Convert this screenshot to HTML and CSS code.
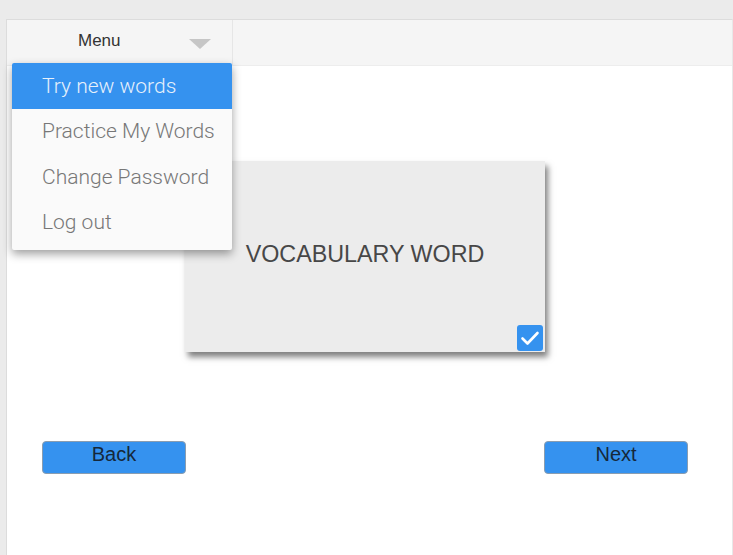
FILE: index.html
```html
<!DOCTYPE html>
<html>
<head>
<meta charset="utf-8">
<link rel="stylesheet" href="styles.css">
</head>
<body>
<div class="frame">
  <header class="topbar">
    <div class="menu-cell">
      <span class="menu-label">Menu</span>
      <span class="caret"></span>
      <ul class="dropdown">
        <li class="item active">Try new words</li>
        <li class="item">Practice My Words</li>
        <li class="item">Change Password</li>
        <li class="item">Log out</li>
      </ul>
    </div>
    <div class="bar-rest"></div>
  </header>
  <main class="content">
    <div class="card">
      <span class="word">VOCABULARY WORD</span>
      <span class="check">
        <svg width="26" height="26" viewBox="0 0 26 26"><path d="M5.5 13.5 L10.5 18.5 L20.5 8" fill="none" stroke="#fff" stroke-width="2.6" stroke-linecap="round" stroke-linejoin="round"/></svg>
      </span>
    </div>
    <div class="nav">
      <button class="btn">Back</button>
      <button class="btn">Next</button>
    </div>
  </main>
</div>
</body>
</html>
```

FILE: styles.css
```css
html, body {
  margin: 0;
  padding: 0;
  height: 100%;
}
body {
  background: #ebebeb;
  overflow: hidden;
}
.frame {
  margin: 19px 0 0 6px;
  height: calc(100% - 19px);
  border-top: 1px solid #dcdcdc;
  border-left: 1px solid #dcdcdc;
  border-right: 1px solid #e8e8e8;
  background: #fff;
  box-sizing: border-box;
}
.topbar {
  display: flex;
  height: 46px;
  background: #f5f5f5;
  border-bottom: 1px solid #ededed;
  box-sizing: border-box;
}
.menu-cell {
  position: relative;
  width: 226px;
  border-right: 1px solid #e6e6e6;
  display: flex;
  align-items: center;
  box-sizing: border-box;
}
.menu-label {
  margin-left: 71px;
  margin-top: -3px;
  font-family: "Liberation Sans", Arial, sans-serif;
  font-size: 17px;
  color: #333;
}
.caret {
  margin-left: 68px;
  width: 0;
  height: 0;
  border-left: 11px solid transparent;
  border-right: 11px solid transparent;
  border-top: 10px solid #c6c6c6;
  margin-top: 2px;
}
.bar-rest {
  flex: 1;
}
.dropdown {
  position: absolute;
  left: 5px;
  top: 43px;
  width: 220px;
  margin: 0;
  padding: 0 0 5px;
  list-style: none;
  background: #fafafa;
  box-shadow: 0 4px 10px rgba(0,0,0,0.38);
  border-radius: 2px;
  z-index: 5;
}
.item {
  height: 45.5px;
  display: flex;
  align-items: center;
  padding-left: 30px;
  box-sizing: border-box;
  font-family: Roboto, "Noto Sans", sans-serif;
  font-weight: 300;
  font-size: 21px;
  color: #777;
}
.item.active {
  background: #3592ef;
  color: #e6f0fb;
  border-radius: 2px 2px 0 0;
}
.content {
  padding: 95px 44px 0 0;
}
.card {
  position: relative;
  margin-left: 178px;
  width: 360px;
  height: 191px;
  background: #ececec;
  box-shadow: 3px 5px 6px rgba(0,0,0,0.5);
  display: flex;
  align-items: center;
  justify-content: center;
}
.word {
  font-family: "Liberation Sans", Arial, sans-serif;
  font-size: 23.3px;
  color: #474747;
  margin-top: -4px;
}
.check {
  position: absolute;
  right: 2px;
  bottom: 1px;
  width: 26px;
  height: 26px;
  background: #3592ef;
  border-radius: 3px;
  display: flex;
}
.nav {
  display: flex;
  justify-content: space-between;
  margin-top: 89px;
  padding-left: 35px;
}
.btn {
  width: 144px;
  height: 33px;
  background: #3592ef;
  border: 1px solid #8a9db0;
  border-radius: 4px;
  font-family: "Liberation Sans", Arial, sans-serif;
  font-size: 20px;
  color: #15283a;
  padding: 0 0 8px;
  line-height: 24px;
}
```
